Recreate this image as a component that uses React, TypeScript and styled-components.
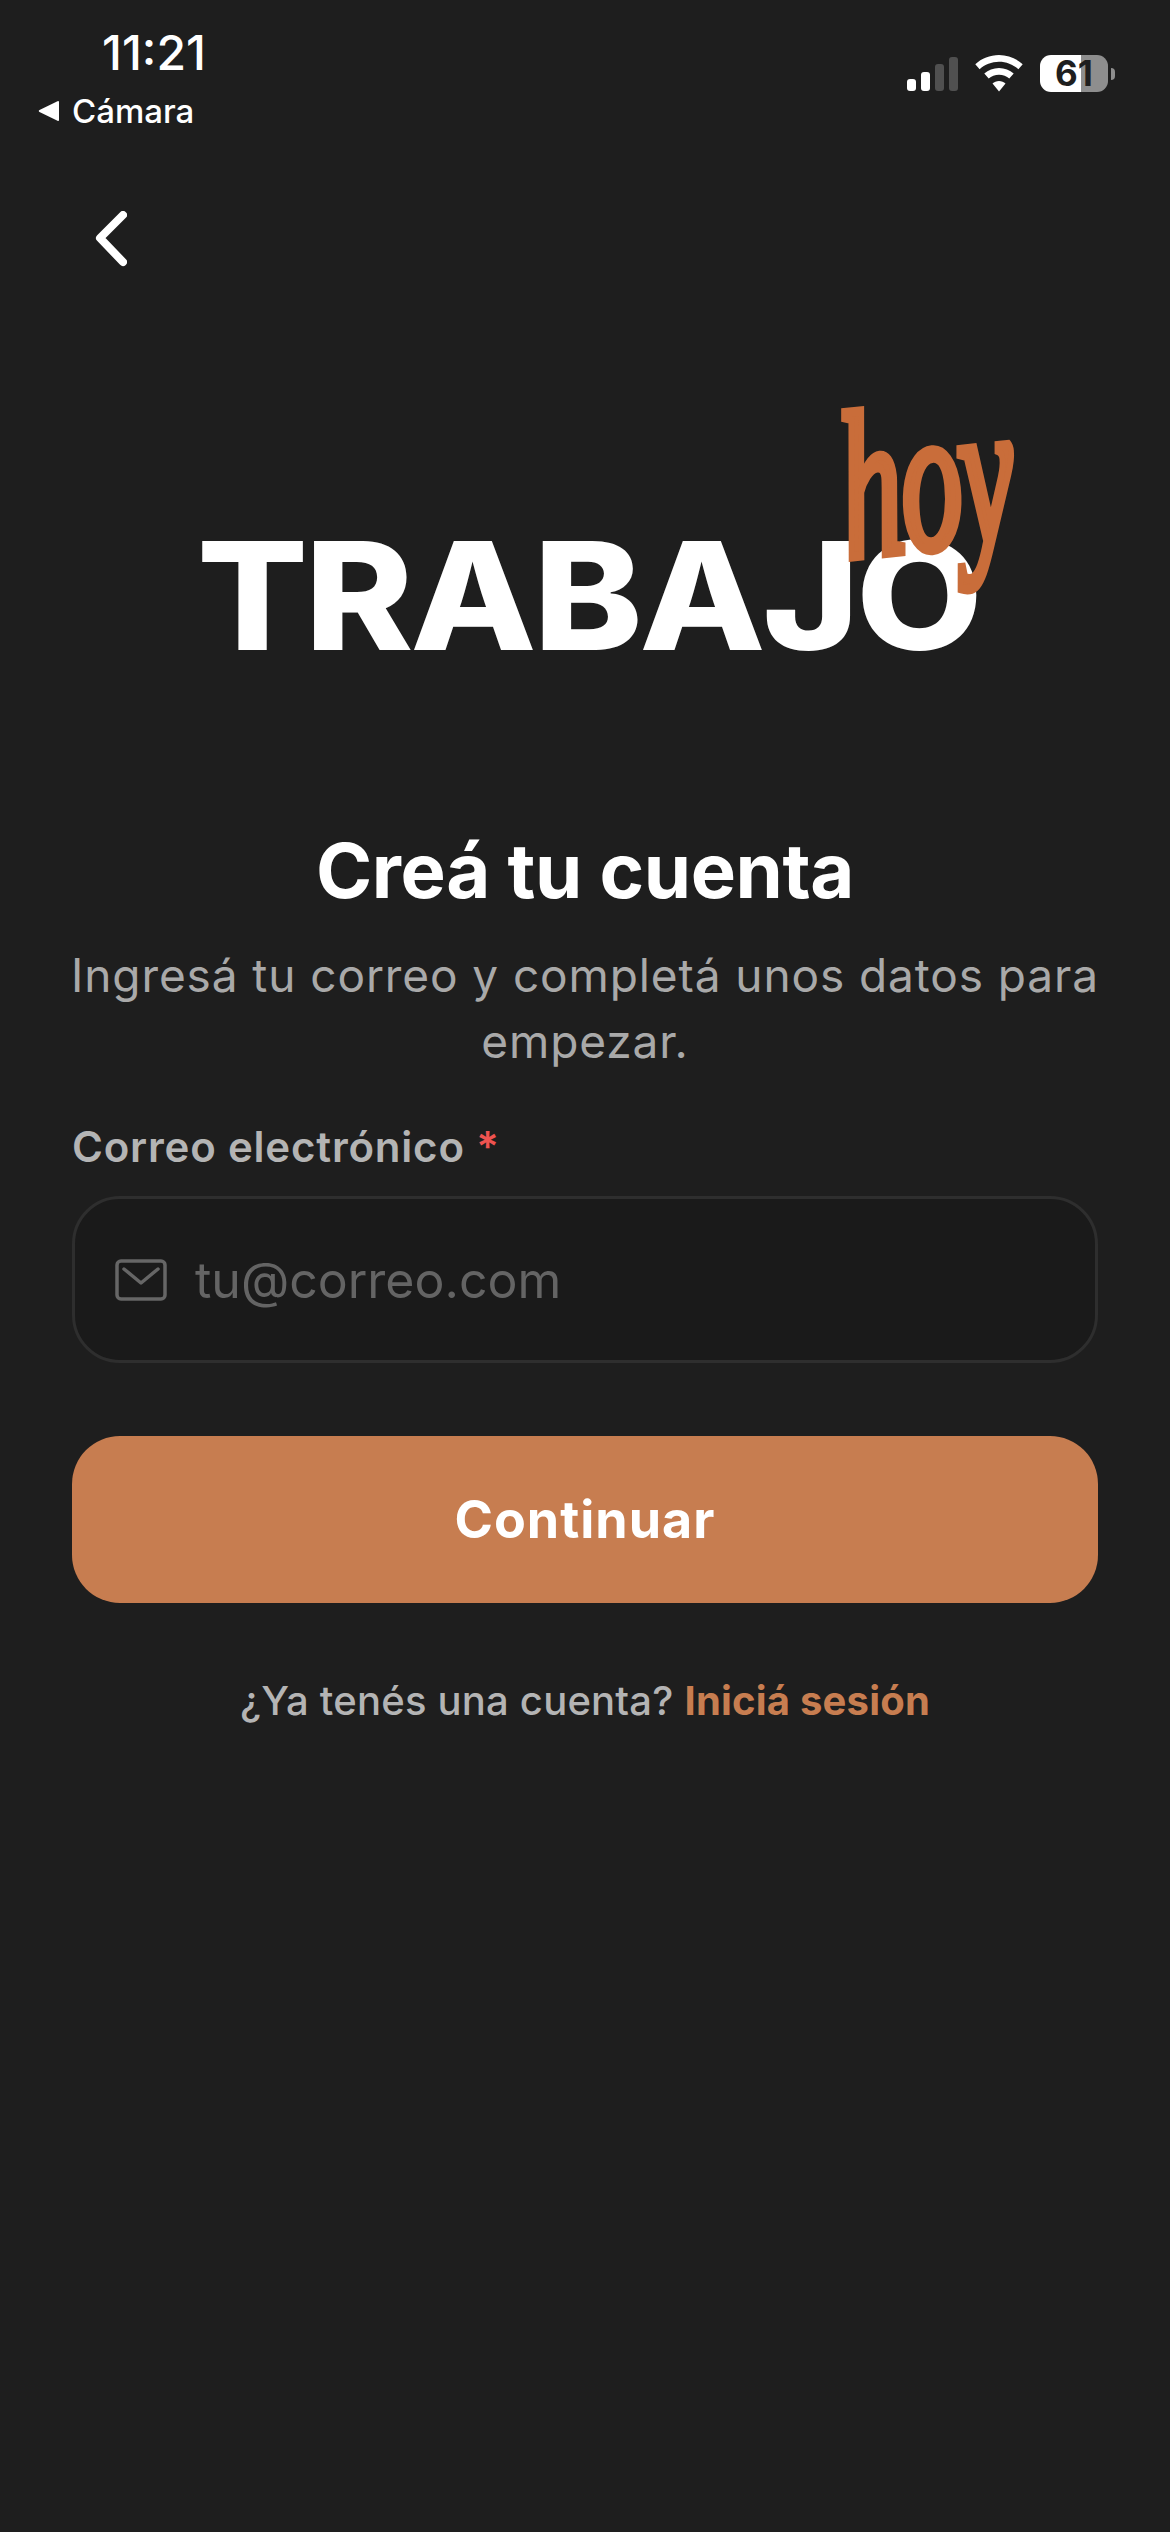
import styled, { createGlobalStyle } from "styled-components";

const GlobalStyle = createGlobalStyle`
    html, body {
        margin: 0;
        padding: 0;
        background: #1e1e1e;
    }
    * {
        box-sizing: border-box;
    }
`;

const Screen = styled.div`
    width: 1170px;
    height: 2532px;
    background: #1e1e1e;
    color: #fff;
    font-family: Inter, "Liberation Sans", sans-serif;
    overflow: hidden;
    display: flex;
    flex-direction: column;
`;

const StatusBar = styled.div`
    display: flex;
    justify-content: space-between;
    height: 132px;
    padding: 26px 55px 0 38px;
`;

const StatusLeft = styled.div`
    display: flex;
    flex-direction: column;
`;

const Time = styled.div`
    font-size: 48px;
    line-height: 54px;
    font-weight: 500;
    margin-left: 64px;
`;

const CameraLink = styled.div`
    display: flex;
    align-items: center;
    gap: 12px;
    font-size: 33px;
    line-height: 40px;
    font-weight: 500;
    margin-top: 11px;
`;

const StatusRight = styled.div`
    display: flex;
    align-items: flex-start;
    padding-top: 29px;
    gap: 17px;
`;

const SignalBars = styled.div`
    display: flex;
    align-items: flex-end;
    gap: 5px;
    height: 35px;
    margin-top: 1px;
`;

const SignalBar = styled.span<{ $height: number; $on?: boolean }>`
    width: 9px;
    height: ${({ $height }) => $height}px;
    border-radius: 3px;
    background: ${({ $on }) => ($on ? "#fff" : "#505050")};
`;

const BatteryRow = styled.div`
    display: flex;
    align-items: center;
    gap: 3px;
    height: 37px;
`;

const BatteryBody = styled.div`
    width: 68px;
    height: 37px;
    border-radius: 11px;
    background: linear-gradient(to right, #fff 0 41px, #8e8e8e 41px);
    color: #1e1e1e;
    font-size: 35px;
    line-height: 37px;
    font-weight: 700;
    text-align: center;
`;

const BatteryNub = styled.span`
    width: 4px;
    height: 12px;
    border-radius: 0 6px 6px 0;
    background: #8e8e8e;
`;

const BackButton = styled.button`
    display: flex;
    width: 60px;
    height: 60px;
    padding: 0;
    margin: 77px 0 0 81px;
    align-items: center;
    justify-content: center;
    background: none;
    border: 0;
    color: #fff;
`;

const LogoArea = styled.div`
    display: flex;
    justify-content: center;
    margin-top: 119px;
    height: 265px;
`;

const LogoMark = styled.div`
    position: relative;
    align-self: flex-end;
    width: 780px;
    height: 115px;
    margin-left: 4px;
`;

const LogoWord = styled.div`
    font-family: Inter, "Liberation Sans", sans-serif;
    font-size: 150px;
    line-height: 115px;
    font-weight: 800;
    letter-spacing: -3px;
    color: #fff;
    white-space: nowrap;
    transform: scaleX(1.095);
    transform-origin: left center;
`;

const LogoScript = styled.span`
    position: absolute;
    left: 609px;
    top: -154px;
    font-family: "Liberation Serif", serif;
    font-style: italic;
    font-weight: 400;
    font-size: 170px;
    line-height: 190px;
    letter-spacing: -2px;
    color: #c96d3a;
    transform: rotate(-6deg) scale(0.72, 1.22);
    -webkit-text-stroke: 8px #c96d3a;
`;

const Content = styled.main`
    display: flex;
    flex-direction: column;
    padding: 0 72px;
    margin-top: 174px;
`;

const Title = styled.h1`
    margin: 0;
    font-size: 76px;
    line-height: 86px;
    font-weight: 700;
    letter-spacing: -0.4px;
    text-align: center;
`;

const Subtitle = styled.p`
    margin: 29px -10px 0;
    font-size: 46px;
    line-height: 66px;
    font-weight: 400;
    letter-spacing: 0.9px;
    color: #a9a9a9;
    text-align: center;
`;

const Label = styled.label`
    display: block;
    margin-top: 48px;
    font-size: 42px;
    line-height: 50px;
    font-weight: 600;
    letter-spacing: 0.8px;
    color: #b4b4b4;
`;

const Required = styled.span`
    color: #ef5350;
`;

const InputBox = styled.div`
    display: flex;
    align-items: center;
    gap: 28px;
    height: 167px;
    margin-top: 24px;
    padding: 0 40px;
    background: #1a1a1a;
    border: 3px solid #2e2e2e;
    border-radius: 48px;
    color: #666;
`;

const Placeholder = styled.span`
    font-size: 50px;
    font-weight: 400;
    color: #646464;
`;

const PrimaryButton = styled.button`
    height: 167px;
    margin-top: 73px;
    border: 0;
    border-radius: 48px;
    background: #c77d50;
    color: #fff;
    font-family: inherit;
    font-size: 52px;
    font-weight: 700;
    letter-spacing: 1px;
`;

const Footer = styled.p`
    margin: 73px 0 0;
    font-size: 40px;
    line-height: 50px;
    font-weight: 500;
    letter-spacing: 0.2px;
    color: #b4b4b4;
    text-align: center;
`;

const FooterLink = styled.span`
    font-weight: 700;
    color: #c77d50;
`;

const App = () => {
    return (
        <Screen>
            <GlobalStyle />
            <StatusBar>
                <StatusLeft>
                    <Time>11:21</Time>
                    <CameraLink>
                        <svg width="22" height="22" viewBox="0 0 22 22">
                            <path d="M21 2v18a1 1 0 0 1-1.5.8L1.500 12a1.2 1.2 0 0 1 0-2L19.500 1.200A1 1 0 0 1 21 2z" fill="#fff" />
                        </svg>
                        Cámara
                    </CameraLink>
                </StatusLeft>
                <StatusRight>
                    <SignalBars>
                        <SignalBar $height={12} $on />
                        <SignalBar $height={19} $on />
                        <SignalBar $height={27} />
                        <SignalBar $height={34} />
                    </SignalBars>
                    <svg width="48" height="37" viewBox="0 0 48 37" fill="#fff">
                        <path d="M24 0c9 0 17.400 3.500 23.700 9.200l-4.300 5C38.200 9.500 31.400 6.700 24 6.700S9.800 9.500 4.600 14.200l-4.300-5C6.600 3.500 15 0 24 0z" />
                        <path d="M24 13c5.600 0 10.800 2.100 14.700 5.600l-4.400 5C31.600 21.200 28 19.800 24 19.800s-7.600 1.400-10.300 3.800l-4.400-5C13.200 15.100 18.400 13 24 13z" />
                        <path d="M24 26c2.500 0 4.800.9 6.500 2.500L24 36.500l-6.500-8C19.200 26.900 21.500 26 24 26z" />
                    </svg>
                    <BatteryRow>
                        <BatteryBody>61</BatteryBody>
                        <BatteryNub />
                    </BatteryRow>
                </StatusRight>
            </StatusBar>
            <BackButton aria-label="Volver">
                <svg width="32" height="56" viewBox="0 0 32 56" fill="none" stroke="currentColor" strokeWidth="8" strokeLinecap="round" strokeLinejoin="round">
                    <path d="M28 4L5 27l23 24" />
                </svg>
            </BackButton>
            <LogoArea>
                <LogoMark>
                    <LogoWord>TRABAJO</LogoWord>
                    <LogoScript>hoy</LogoScript>
                </LogoMark>
            </LogoArea>
            <Content>
                <Title>Creá tu cuenta</Title>
                <Subtitle>Ingresá tu correo y completá unos datos para empezar.</Subtitle>
                <Label>
                    Correo electrónico <Required>*</Required>
                </Label>
                <InputBox>
                    <svg width="52" height="42" viewBox="0 0 52 42" fill="none" stroke="currentColor" strokeWidth="3.500" strokeLinecap="round" strokeLinejoin="round">
                        <rect x="2" y="2" width="48" height="38" rx="4" />
                        <path d="M9 10l17 14 17-14" />
                    </svg>
                    <Placeholder>tu@correo.com</Placeholder>
                </InputBox>
                <PrimaryButton>Continuar</PrimaryButton>
                <Footer>
                    ¿Ya tenés una cuenta? <FooterLink>Iniciá sesión</FooterLink>
                </Footer>
            </Content>
        </Screen>
    );
};

export default App;
